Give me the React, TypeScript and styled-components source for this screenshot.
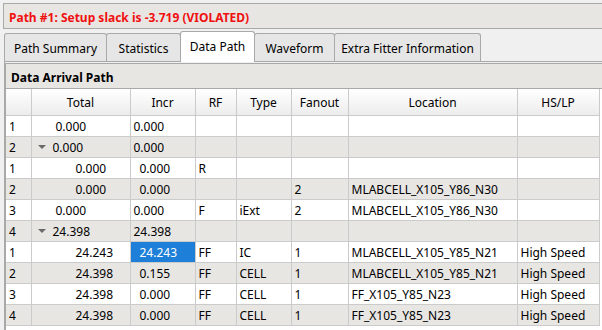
import styled, { createGlobalStyle } from "styled-components";

const GlobalStyle = createGlobalStyle`
  html, body {
    margin: 0;
    padding: 0;
    background: #f0f0f0;
    font-family: "Noto Sans", "Open Sans", sans-serif;
    font-size: 12px;
    color: #000;
  }
`;

const COLOR_BAND = "#e8e6e3";
const COLOR_LINE = "#a9a9a9";
const COLOR_GRID = "#cbcbcb";

const Page = styled.div`
  width: 602px;
  height: 330px;
  overflow: hidden;
  padding: 3px 0 0 3px;
  box-sizing: border-box;
  display: flex;
  flex-direction: column;
`;

const TitleBar = styled.div`
  height: 26px;
  flex-shrink: 0;
  box-sizing: border-box;
  border: 1px solid ${COLOR_LINE};
  border-right: none;
  background: ${COLOR_BAND};
  color: #f01010;
  font-weight: 700;
  font-size: 12px;
  display: flex;
  align-items: center;
  padding: 2px 0 0 5px;
  white-space: nowrap;
`;

const TabBar = styled.div`
  display: flex;
  align-items: flex-end;
  flex-shrink: 0;
  margin-top: 2px;
  padding-left: 1px;
  height: 30px;
`;

const Tab = styled.div<{ $w: number; $active?: boolean }>`
  width: ${({ $w }) => $w}px;
  height: 28px;
  box-sizing: border-box;
  border: 1px solid ${COLOR_LINE};
  border-bottom: none;
  border-radius: 3px 3px 0 0;
  background: #e6e6e6;
  display: flex;
  align-items: center;
  justify-content: center;
  white-space: nowrap;
  margin-right: -1px;
  padding-top: 1px;
  ${({ $active }) =>
    $active
      ? "position: relative; z-index: 1; background: #ffffff; height: 31px; margin-bottom: -1px; padding-top: 0; padding-bottom: 2px;"
      : ""}
`;

const Pane = styled.div`
  flex: 1;
  border-top: 1px solid ${COLOR_LINE};
  border-left: 1px solid ${COLOR_LINE};
  margin-left: 1px;
  display: flex;
  flex-direction: column;
  min-height: 0;
`;

const SectionHeader = styled.div`
  margin-top: 1px;
  height: 26px;
  flex-shrink: 0;
  box-sizing: border-box;
  border: 1px solid ${COLOR_LINE};
  border-right: none;
  background: ${COLOR_BAND};
  font-weight: 700;
  display: flex;
  align-items: center;
  padding: 2px 0 0 5px;
`;

const TableArea = styled.div`
  flex: 1;
  background: #ffffff;
  border-left: 1px solid ${COLOR_LINE};
  overflow: hidden;
`;

const Grid = styled.table`
  border-collapse: collapse;
  table-layout: fixed;
  width: 593px;
  font-size: 12px;
`;

const HeadCell = styled.th`
  height: 24px;
  padding: 2px 0 0;
  line-height: 20px;
  font-weight: 400;
  text-align: center;
  background: linear-gradient(#ffffff, #ececec);
  border-right: 1px solid ${COLOR_GRID};
  border-bottom: 1px solid ${COLOR_GRID};
  white-space: nowrap;
`;

const Row = styled.tr<{ $shade: boolean }>`
  height: 21px;
  background: ${({ $shade }) => ($shade ? COLOR_BAND : "#ffffff")};
`;

const Cell = styled.td<{ $indent?: number; $selected?: boolean }>`
  padding: 2px 0 0 ${({ $indent }) => $indent ?? 3}px;
  line-height: 18px;
  border-right: 1px solid ${COLOR_GRID};
  border-bottom: 1px solid ${COLOR_GRID};
  white-space: nowrap;
  overflow: hidden;
  ${({ $selected }) =>
    $selected ? "background: #1e7fd8; color: #ffffff;" : ""}
`;

const Expander = styled.span`
  display: inline-block;
  width: 0;
  height: 0;
  border-left: 4px solid transparent;
  border-right: 4px solid transparent;
  border-top: 4px solid #6a6a6a;
  margin: 0 7px 3px 6px;
  vertical-align: middle;
`;

const columns = [
  { label: "", w: 25 },
  { label: "Total", w: 99 },
  { label: "Incr", w: 65 },
  { label: "RF", w: 41 },
  { label: "Type", w: 55 },
  { label: "Fanout", w: 57 },
  { label: "Location", w: 169 },
  { label: "HS/LP", w: 82 },
];

type RowData = {
  n: string;
  total: string;
  incr: string;
  rf?: string;
  type?: string;
  fanout?: string;
  loc?: string;
  hs?: string;
  level: 0 | 1 | 2;
  selectIncr?: boolean;
};

const rows: RowData[] = [
  { n: "1", total: "0.000", incr: "0.000", level: 0 },
  { n: "2", total: "0.000", incr: "0.000", level: 1 },
  { n: "1", total: "0.000", incr: "0.000", rf: "R", level: 2 },
  { n: "2", total: "0.000", incr: "0.000", fanout: "2", loc: "MLABCELL_X105_Y86_N30", level: 2 },
  { n: "3", total: "0.000", incr: "0.000", rf: "F", type: "iExt", fanout: "2", loc: "MLABCELL_X105_Y86_N30", level: 0 },
  { n: "4", total: "24.398", incr: "24.398", level: 1 },
  { n: "1", total: "24.243", incr: "24.243", rf: "FF", type: "IC", fanout: "1", loc: "MLABCELL_X105_Y85_N21", hs: "High Speed", level: 2, selectIncr: true },
  { n: "2", total: "24.398", incr: "0.155", rf: "FF", type: "CELL", fanout: "1", loc: "MLABCELL_X105_Y85_N21", hs: "High Speed", level: 2 },
  { n: "3", total: "24.398", incr: "0.000", rf: "FF", type: "CELL", fanout: "1", loc: "FF_X105_Y85_N23", hs: "High Speed", level: 2 },
  { n: "4", total: "24.398", incr: "0.000", rf: "FF", type: "CELL", fanout: "1", loc: "FF_X105_Y85_N23", hs: "High Speed", level: 2 },
];

const tabs = [
  { label: "Path Summary", w: 103 },
  { label: "Statistics", w: 75 },
  { label: "Data Path", w: 75, active: true },
  { label: "Waveform", w: 81 },
  { label: "Extra Fitter Information", w: 147 },
];

export default function App() {
  return (
    <>
      <GlobalStyle />
      <Page>
        <TitleBar>Path #1: Setup slack is -3.719 (VIOLATED)</TitleBar>
        <TabBar>
          {tabs.map((t) => (
            <Tab key={t.label} $w={t.w} $active={t.active}>
              {t.label}
            </Tab>
          ))}
        </TabBar>
        <Pane>
          <SectionHeader>Data Arrival Path</SectionHeader>
          <TableArea>
            <Grid>
              <colgroup>
                {columns.map((c, i) => (
                  <col key={i} style={{ width: c.w }} />
                ))}
              </colgroup>
              <thead>
                <tr>
                  {columns.map((c, i) => (
                    <HeadCell key={i}>{c.label}</HeadCell>
                  ))}
                </tr>
              </thead>
              <tbody>
                {rows.map((r, i) => (
                  <Row key={i} $shade={i % 2 === 1}>
                    <Cell $indent={3}>{r.n}</Cell>
                    <Cell $indent={r.level === 2 ? 44 : r.level === 1 ? 0 : 24}>
                      {r.level === 1 && <Expander />}
                      {r.total}
                    </Cell>
                    <Cell $indent={r.level === 2 ? 9 : 3} $selected={r.selectIncr}>
                      {r.incr}
                    </Cell>
                    <Cell>{r.rf}</Cell>
                    <Cell>{r.type}</Cell>
                    <Cell>{r.fanout}</Cell>
                    <Cell>{r.loc}</Cell>
                    <Cell>{r.hs}</Cell>
                  </Row>
                ))}
              </tbody>
            </Grid>
          </TableArea>
        </Pane>
      </Page>
    </>
  );
}
